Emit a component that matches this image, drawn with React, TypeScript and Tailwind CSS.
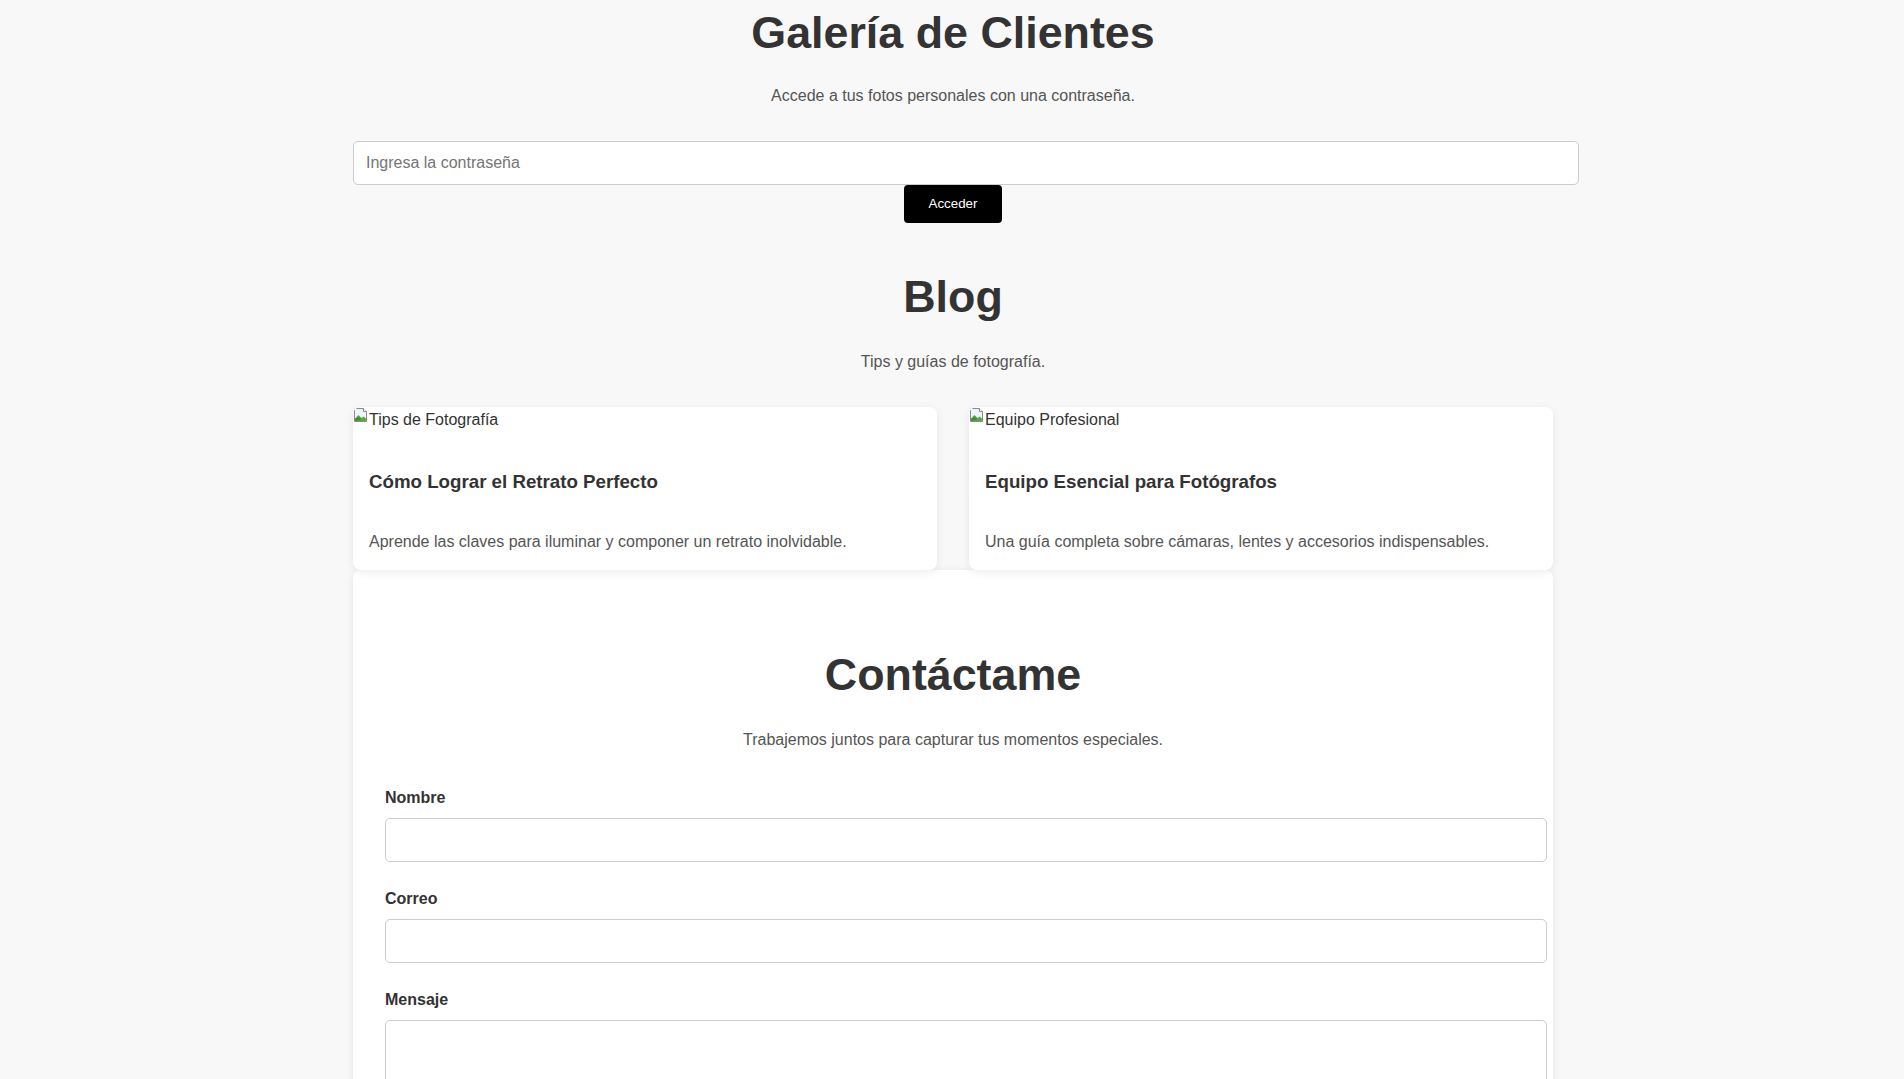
const posts = [
  {
    alt: "Tips de Fotografía",
    title: "Cómo Lograr el Retrato Perfecto",
    text: "Aprende las claves para iluminar y componer un retrato inolvidable.",
  },
  {
    alt: "Equipo Profesional",
    title: "Equipo Esencial para Fotógrafos",
    text: "Una guía completa sobre cámaras, lentes y accesorios indispensables.",
  },
]

// icono de imagen rota (la foto no carga en la captura)
const BrokenImage = () => (
  <svg width="16" height="16" viewBox="0 0 16 16" className="shrink-0">
    <path d="M1.5 1.5h9l3 3v10h-12z" fill="#eef4fb" stroke="#8a8a8a" />
    <path d="M10.5 1.5v3h3" fill="#fff" stroke="#8a8a8a" />
    <path d="M2 14V11.5L5.5 8l3 3 2-1.5 3 2.5V14z" fill="#5aa844" />
    <path d="M2 14V12.5l3.5-3 3 3z" fill="#3f8f2f" />
  </svg>
)

const Field = ({ label, textarea }: { label: string; textarea?: boolean }) => (
  <div className="mb-[23.6px]">
    <label className="block mb-2 text-base font-bold leading-[25.6px] text-[#333]">{label}</label>
    {textarea ? (
      <textarea className="block w-[calc(100%+26px)] h-[150px] px-3 py-3 bg-white border border-[#ccc] rounded-[5px] text-base resize-y" />
    ) : (
      <input type="text" className="block w-[calc(100%+26px)] h-[44px] px-3 bg-white border border-[#ccc] rounded-[5px] text-base" />
    )}
  </div>
)

export default function App() {
  return (
    <div className="min-h-screen bg-[#f8f8f8] pl-[2px] font-['Liberation_Sans',Arial,sans-serif] text-[#333]">
      <div className="mx-auto w-[1200px] pb-10">
        {/* galeria */}
        <section className="pt-[6px] text-center">
          <h1 className="text-[44.8px] font-bold leading-[52px]">Galería de Clientes</h1>
          <p className="mt-[26px] text-base leading-6 text-[#555]">Accede a tus fotos personales con una contraseña.</p>
          <input
            type="password"
            placeholder="Ingresa la contraseña"
            className="block mt-[33px] w-[calc(100%+26px)] h-[44px] px-3 bg-white border border-[#ccc] rounded-[5px] text-base placeholder:text-[#757575]"
          />
          <button className="mx-auto block h-[38px] px-[24.5px] bg-black text-white text-[13.33px] rounded-[4px]">Acceder</button>
        </section>

        {/* blog */}
        <section className="mt-[46.5px] text-center">
          <h2 className="text-[44.8px] font-bold leading-[52px]">Blog</h2>
          <p className="mt-[28px] text-base leading-6 text-[#555]">Tips y guías de fotografía.</p>
        </section>
        <div className="mt-[33.5px] grid grid-cols-2 gap-8">
          {posts.map((p) => (
            <div key={p.title} className="h-[163px] bg-white rounded-lg shadow-[0_2px_10px_rgba(0,0,0,0.08)] overflow-hidden">
              <div className="flex items-start h-5 text-base leading-5 text-[#333]">
                <BrokenImage />
                <span className="pt-[2.5px]">{p.alt}</span>
              </div>
              <div className="px-4 pt-[40px]">
                <h3 className="text-[18.72px] font-bold leading-[30px] text-[#333]">{p.title}</h3>
                <p className="mt-[31.5px] text-base leading-[25.6px] text-[#555]">{p.text}</p>
              </div>
            </div>
          ))}
        </div>

        {/* contacto */}
        <section className="bg-white rounded-lg shadow-[0_2px_10px_rgba(0,0,0,0.08)] px-8 pt-[77.5px] pb-8">
          <h2 className="text-center text-[44.8px] font-bold leading-[52px]">Contáctame</h2>
          <p className="mt-[28.5px] text-center text-base leading-6 text-[#555]">Trabajemos juntos para capturar tus momentos especiales.</p>
          <form className="mt-[32.5px]">
            <Field label="Nombre" />
            <Field label="Correo" />
            <Field label="Mensaje" textarea />
            <button type="button" className="h-[38px] px-6 bg-black text-white text-[13.33px] rounded-[4px]">Enviar</button>
          </form>
        </section>
      </div>
    </div>
  )
}
